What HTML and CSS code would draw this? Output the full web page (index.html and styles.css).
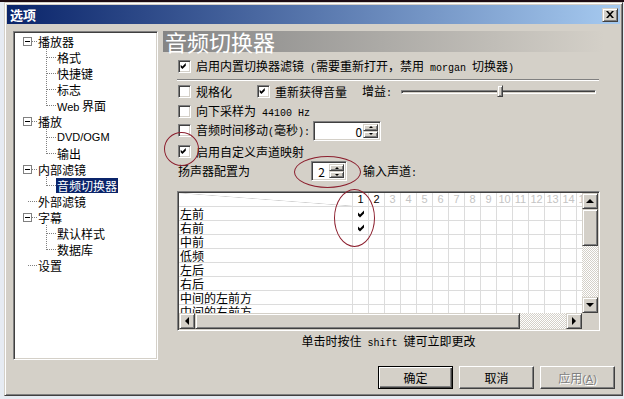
FILE: index.html
```html
<!DOCTYPE html>
<html lang="zh-CN">
<head>
	<meta charset="UTF-8" />
	<title>选项</title>
	<link rel="stylesheet" href="styles.css">
</head>
<body>
	<div class="dialog">
		<div class="titlebar">
			<span class="title">选项</span>
			<span class="close">
				<svg width="8" height="7" viewBox="0 0 8 7"><path d="M0 0h2l2 2.3L6 0h2L5 3.5 8 7H6L4 4.7 2 7H0l3-3.5z" fill="#000"/></svg>
			</span>
		</div>

		<div class="main">
			<div class="tree">
				<div class="node"><i class="g root"><b class="box"></b></i><span>播放器</span></div>
				<div class="node"><i class="g"></i><i class="g tee"></i><span>格式</span></div>
				<div class="node"><i class="g"></i><i class="g tee"></i><span>快捷键</span></div>
				<div class="node"><i class="g"></i><i class="g tee"></i><span>标志</span></div>
				<div class="node"><i class="g"></i><i class="g end"></i><span><span class="lat">Web</span> 界面</span></div>
				<div class="node"><i class="g root"><b class="box"></b></i><span>播放</span></div>
				<div class="node"><i class="g"></i><i class="g tee"></i><span class="lat">DVD/OGM</span></div>
				<div class="node"><i class="g"></i><i class="g end"></i><span>输出</span></div>
				<div class="node"><i class="g root"><b class="box"></b></i><span>内部滤镜</span></div>
				<div class="node"><i class="g"></i><i class="g end"></i><span class="sel">音频切换器</span></div>
				<div class="node"><i class="g root"></i><span>外部滤镜</span></div>
				<div class="node"><i class="g root"><b class="box"></b></i><span>字幕</span></div>
				<div class="node"><i class="g"></i><i class="g tee"></i><span>默认样式</span></div>
				<div class="node"><i class="g"></i><i class="g end"></i><span>数据库</span></div>
				<div class="node"><i class="g root"></i><span>设置</span></div>
			</div>

			<div class="page">
				<div class="banner">音频切换器</div>

				<div class="row r1">
					<span class="chk on"><svg viewBox="0 0 13 13"><path d="M2 4.5l2 2 4-4v3l-4 4-2-2z"/></svg></span>
					<span>启用内置切换器滤镜<span class="m"> (</span>需要重新打开，禁用<span class="m"> morgan </span>切换器<span class="m">)</span></span>
				</div>

				<div class="sep"></div>

				<div class="row r2">
					<span class="opt w74"><span class="chk"></span>规格化</span>
					<span class="opt"><span class="chk on"><svg viewBox="0 0 13 13"><path d="M2 4.5l2 2 4-4v3l-4 4-2-2z"/></svg></span>重新获得音量</span>
					<span class="gain">增益<span class="m">:</span></span>
					<span class="slider"><span class="track"></span><span class="thumb" style="left: 96px"></span></span>
				</div>

				<div class="row r3">
					<span class="chk"></span>
					<span>向下采样为<span class="m"> 44100 Hz</span></span>
				</div>

				<div class="row r4">
					<span class="chk"></span>
					<span>音频时间移动<span class="m">(</span>毫秒<span class="m">):</span></span>
					<span class="spin w68"><span class="val right">0</span><span class="arrows"><b class="up"></b><b class="dn"></b></span></span>
				</div>

				<div class="row r5">
					<span class="chk on"><svg viewBox="0 0 13 13"><path d="M2 4.5l2 2 4-4v3l-4 4-2-2z"/></svg></span>
					<span>启用自定义声道映射</span>
				</div>

				<div class="row r6">
					<span class="speaker">扬声器配置为</span>
					<span class="spin w36"><span class="val">2</span><span class="arrows"><b class="up"></b><b class="dn"></b></span></span>
					<span class="inputs">输入声道<span class="m">:</span></span>
				</div>

				<div class="grid">
					<div class="cells">
						<div class="hdr">
							<span class="corner"></span>
							<span>1</span><span>2</span><span class="off">3</span><span class="off">4</span><span class="off">5</span><span class="off">6</span><span class="off">7</span><span class="off">8</span><span class="off">9</span><span class="off">10</span><span class="off">11</span><span class="off">12</span><span class="off">13</span><span class="off">14</span><span class="off">15</span>
						</div>
						<div class="r"><span class="lab">左前</span><span class="c"><svg viewBox="0 0 9 9"><path d="M1 3.5l2 2 4-4v3l-4 4-2-2z"/></svg></span></div>
						<div class="r"><span class="lab">右前</span><span class="c"><svg viewBox="0 0 9 9"><path d="M1 3.5l2 2 4-4v3l-4 4-2-2z"/></svg></span></div>
						<div class="r"><span class="lab">中前</span><span class="c"></span></div>
						<div class="r"><span class="lab">低频</span><span class="c"></span></div>
						<div class="r"><span class="lab">左后</span><span class="c"></span></div>
						<div class="r"><span class="lab">右后</span><span class="c"></span></div>
						<div class="r"><span class="lab">中间的左前方</span><span class="c"></span></div>
						<div class="r"><span class="lab">中间的右前方</span><span class="c"></span></div>
					</div>
					<div class="vscroll">
						<b class="sbtn"><i class="a-up"></i></b>
						<b class="sthumb v"></b>
						<b class="strack"></b>
						<b class="sbtn"><i class="a-dn"></i></b>
					</div>
					<div class="hscroll">
						<b class="sbtn"><i class="a-lt"></i></b>
						<b class="sthumb h"></b>
						<b class="strack"></b>
						<b class="sbtn"><i class="a-rt"></i></b>
					</div>
					<div class="sizer"></div>
				</div>

				<div class="hint">单击时按住<span class="m"> shift </span>键可立即更改</div>

				<span class="mark e1"></span>
				<span class="mark e2"></span>
				<span class="mark e3"></span>
			</div>
		</div>

		<div class="buttons">
			<button class="btn default">确定</button>
			<button class="btn">取消</button>
			<button class="btn" disabled>应用<span class="lat">(<u>A</u>)</span></button>
		</div>
	</div>
</body>
</html>
```

FILE: styles.css
```css
* {
	box-sizing: border-box;
}

body {
	margin: 0;
	width: 624px;
	height: 399px;
	overflow: hidden;
	background: linear-gradient(#1d0c13 0 2px, #e6ebf2 2px);
	font: 12px/14px "Noto Sans CJK SC", sans-serif;
	color: #000;
}

.m {
	font: 10px "Liberation Mono", monospace;
	white-space: pre;
}

.lat {
	font: 11px "Liberation Sans", sans-serif;
}

/* classic 3d edges */
.close,
.btn,
.sbtn,
.sthumb,
.arrows b,
.thumb {
	background: #d4d0c8;
	border: 1px solid;
	border-color: #d4d0c8 #404040 #404040 #d4d0c8;
	box-shadow: inset 1px 1px #fff, inset -1px -1px #808080;
}

.chk,
.spin,
.tree,
.grid {
	background: #fff;
	border: 1px solid;
	border-color: #808080 #fff #fff #808080;
	box-shadow: inset 1px 1px #404040, inset -1px -1px #d4d0c8;
}

.dialog {
	width: 619px;
	height: 394px;
	margin: 2px 0 0 4px;
	padding: 2px;
	display: flex;
	flex-direction: column;
	background: #d4d0c8;
	border: 1px solid;
	border-color: #d4d0c8 #404040 #404040 #d4d0c8;
	box-shadow: inset 1px 1px #fff, inset -1px -1px #808080;
}

.titlebar {
	height: 19px;
	flex: none;
	display: flex;
	align-items: center;
	padding: 0 2px 0 3px;
	background: linear-gradient(to right, #0a246a, #a6caf0);
}

.title {
	color: #fff;
	font-weight: bold;
	font-size: 13px;
}

.close {
	margin-left: auto;
	width: 16px;
	height: 14px;
	display: flex;
	align-items: center;
	justify-content: center;
}

.main {
	display: flex;
	height: 329px;
	flex: none;
	margin-top: 7px;
}

/* tree */

.tree {
	width: 145px;
	margin-left: 6px;
	padding: 1px 0 0 4px;
}

.node {
	display: flex;
	align-items: center;
	height: 16px;
	white-space: nowrap;
}

.node > span {
	padding: 0 1px;
	line-height: 15px;
}

.node .sel {
	background: #0a246a;
	color: #fff;
}

.g {
	width: 19px;
	align-self: stretch;
	flex: none;
	display: flex;
	align-items: center;
	justify-content: center;
}

.root {
	background: repeating-linear-gradient(to right, #808080 0 1px, transparent 1px 2px) 10px 8px / 9px 1px no-repeat;
}

.tee {
	background:
		repeating-linear-gradient(to right, #808080 0 1px, transparent 1px 2px) 10px 8px / 9px 1px no-repeat,
		repeating-linear-gradient(#808080 0 1px, transparent 1px 2px) 9px 0 / 1px 100% no-repeat;
}

.end {
	background:
		repeating-linear-gradient(to right, #808080 0 1px, transparent 1px 2px) 10px 8px / 9px 1px no-repeat,
		repeating-linear-gradient(#808080 0 1px, transparent 1px 2px) 9px 0 / 1px 9px no-repeat;
}

.box {
	width: 9px;
	height: 9px;
	border: 1px solid #808080;
	background: linear-gradient(#000, #000) center / 5px 1px no-repeat, #fff;
}

/* page */

.page {
	position: relative;
	width: 441px;
	margin-left: 5px;
	display: flex;
	flex-direction: column;
}

.banner {
	height: 21px;
	padding-left: 2px;
	font-size: 22px;
	line-height: 21px;
	color: #fff;
	background: linear-gradient(to right, #858585, #d4d0c8);
}

.row {
	display: flex;
	align-items: center;
	gap: 5px;
	height: 17px;
	padding-left: 15px;
	white-space: nowrap;
}

.r1 {
	margin-top: 6px;
}

.r2 {
	margin-top: 2px;
}

.r3 {
	margin-top: 3px;
}

.r4 {
	height: 21px;
}

.r5 {
	margin-top: 2px;
}

.r6 {
	height: 22px;
	gap: 0;
}

.sep {
	height: 2px;
	margin: 4px 0 0 14px;
	width: 422px;
	border-top: 1px solid #808080;
	border-bottom: 1px solid #fff;
}

.chk {
	width: 13px;
	height: 13px;
	flex: none;
}

.chk svg {
	display: block;
	width: 11px;
	height: 11px;
}

.opt {
	display: flex;
	align-items: center;
	gap: 5px;
}

.w74 {
	width: 74px;
}

.gain {
	margin-left: 10px;
}

.slider {
	position: relative;
	width: 195px;
	height: 17px;
	margin-left: 4px;
	display: flex;
	align-items: center;
}

.track {
	width: 100%;
	height: 4px;
	border: 1px solid;
	border-color: #808080 #fff #fff #808080;
	box-shadow: inset 1px 1px #404040;
}

.thumb {
	position: absolute;
	top: 2px;
	width: 6px;
	height: 12px;
}

.spin {
	display: flex;
	height: 20px;
	padding: 2px;
	margin-left: -2px;
}

.w68 {
	width: 68px;
}

.w36 {
	width: 36px;
	margin-left: 0;
}

.val {
	flex: 1;
	line-height: 16px;
	text-align: center;
}

.val.right {
	text-align: right;
	padding-right: 1px;
}

.arrows {
	width: 15px;
	display: flex;
	flex-direction: column;
}

.arrows b {
	flex: 1;
	display: flex;
	align-items: center;
	justify-content: center;
}

.arrows b::after {
	content: "";
	border-left: 2px solid transparent;
	border-right: 2px solid transparent;
}

.arrows .up::after {
	border-bottom: 2px solid #000;
}

.arrows .dn::after {
	border-top: 2px solid #000;
}

.speaker {
	width: 133px;
}

.inputs {
	margin-left: 16px;
}

/* channel map */

.grid {
	width: 423px;
	height: 140px;
	margin: 9px 0 0 14px;
	padding: 1px;
	display: grid;
	grid-template-columns: 403px 16px;
	grid-template-rows: 120px 16px;
}

.cells {
	overflow: hidden;
	white-space: nowrap;
}

.hdr,
.r {
	display: flex;
	width: 420px;
	height: 14px;
	border-bottom: 1px solid #dcdcdc;
}

.hdr span {
	flex: none;
	width: 16px;
	border-right: 1px solid #dcdcdc;
	text-align: center;
	font: 11px/13px "Liberation Sans", sans-serif;
}

.hdr .off {
	color: #c4c4c4;
}

.hdr .corner {
	width: 174px;
	background: linear-gradient(to top right, transparent calc(50% - 0.6px), #d0d0d0, transparent calc(50% + 0.6px));
}

.r {
	background: repeating-linear-gradient(to right, transparent 0 15px, #dcdcdc 15px 16px) 14px 0;
}

.lab {
	width: 174px;
	flex: none;
	padding-left: 1px;
	line-height: 13px;
	background: #fff;
	border-right: 1px solid #dcdcdc;
}

.c {
	width: 16px;
	display: flex;
	align-items: center;
	justify-content: center;
}

.c svg {
	width: 9px;
	height: 9px;
}

.vscroll,
.hscroll {
	display: flex;
	background: repeating-conic-gradient(#d4d0c8 0 25%, #fff 0 50%) 0 0 / 2px 2px;
}

.vscroll {
	flex-direction: column;
}

.sbtn {
	width: 16px;
	height: 16px;
	flex: none;
	display: flex;
	align-items: center;
	justify-content: center;
}

.sthumb.v {
	height: 37px;
}

.sthumb.h {
	width: 325px;
}

.strack {
	flex: 1;
}

.sizer {
	background: #d4d0c8;
}

.a-up,
.a-dn {
	border-left: 4px solid transparent;
	border-right: 4px solid transparent;
}

.a-up {
	border-bottom: 4px solid #000;
}

.a-dn {
	border-top: 4px solid #000;
}

.a-lt,
.a-rt {
	border-top: 4px solid transparent;
	border-bottom: 4px solid transparent;
}

.a-lt {
	border-right: 4px solid #000;
}

.a-rt {
	border-left: 4px solid #000;
}

.hint {
	width: 423px;
	margin-left: 14px;
	line-height: 20px;
	text-align: center;
}

/* hand drawn annotations */

.mark {
	position: absolute;
	border: 1px solid #8c1f2e;
	border-radius: 50%;
}

.e1 {
	left: 1px;
	top: 101px;
	width: 35px;
	height: 34px;
}

.e2 {
	left: 131px;
	top: 125px;
	width: 67px;
	height: 32px;
}

.e3 {
	left: 171px;
	top: 158px;
	width: 41px;
	height: 58px;
}

/* footer */

.buttons {
	display: flex;
	justify-content: flex-end;
	gap: 6px;
	margin-top: 6px;
	padding-right: 5px;
}

.btn {
	width: 75px;
	height: 23px;
	padding: 0;
	font: 12px "Noto Sans CJK SC", sans-serif;
	color: #000;
	border-color: #fff #404040 #404040 #fff;
	box-shadow: inset -1px -1px #808080;
}

.btn.default {
	border-color: #000;
	box-shadow: inset 1px 1px #fff, inset -1px -1px #404040, inset -2px -2px #808080;
}

.btn:disabled {
	color: #808080;
	text-shadow: 1px 1px #fff;
}
```
